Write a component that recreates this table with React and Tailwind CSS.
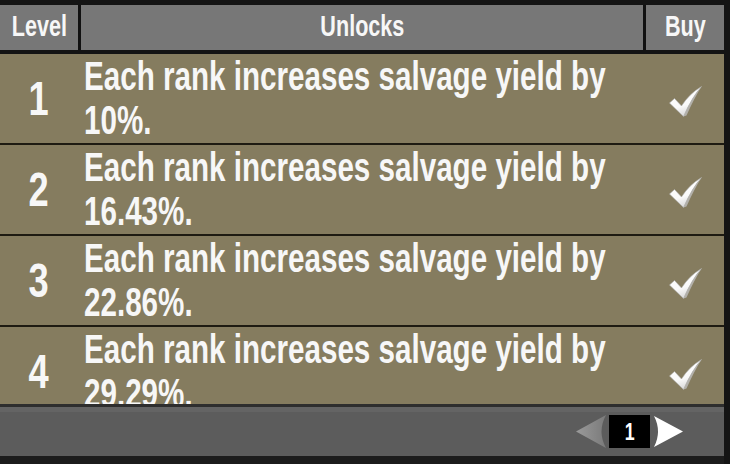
import React from "react";

const rows = [
  { n: 1, v: "10%." },
  { n: 2, v: "16.43%." },
  { n: 3, v: "22.86%." },
  { n: 4, v: "29.29%." },
];

function Check() {
  return (
    <svg width="33" height="31" viewBox="0 0 33 31" className="mt-[6px]">
      <defs>
        <linearGradient id="ck" x1="0" y1="0" x2="0.3" y2="1">
          <stop offset="0" stopColor="#ffffff" />
          <stop offset="0.7" stopColor="#fafafa" />
          <stop offset="1" stopColor="#dcdcdc" />
        </linearGradient>
      </defs>
      <path
        d="M0.5 17 L5.5 12.5 L12.5 20 Q20 8 32.5 0.5 Q23 11 14.5 30.5 Z"
        fill="url(#ck)"
        stroke="#b0b0b0"
        strokeWidth="0.6"
        strokeLinejoin="round"
      />
      <path d="M14.5 30.5 Q23 11 32.5 0.5 Q25 12.5 17.5 29.5 Z" fill="#bdbdbd" opacity="0.8" />
    </svg>
  );
}

function ArrowRight({ color }) {
  return (
    <svg width="29" height="31" viewBox="0 0 29 31">
      <path d="M0 0 L29 15.5 L0 31 Q8 15.5 0 0 Z" fill={color} />
    </svg>
  );
}

function ArrowLeft() {
  return (
    <svg width="30" height="33" viewBox="0 0 30 33">
      <defs>
        <linearGradient id="al" x1="0" y1="0" x2="1" y2="0">
          <stop offset="0" stopColor="#9a9a9a" />
          <stop offset="1" stopColor="#7a7a7a" />
        </linearGradient>
      </defs>
      <path d="M30 0 L0 16.5 L30 33 Q21 16.5 30 0 Z" fill="url(#al)" />
    </svg>
  );
}

export default function App() {
  return (
    <div className="w-[730px] h-[464px] overflow-hidden bg-[#141414] font-['Liberation_Sans',Arial,sans-serif] font-bold text-[#f7f7f7]">
      <div className="flex h-full flex-col pt-[5px] pr-[6px]">
        {/* header */}
        <div className="flex h-[45px] shrink-0 bg-[#777777]">
          <div className="flex w-[78px] items-center justify-center pb-[4px]">
            <span className="scale-x-[0.72] text-[30px] leading-none">Level</span>
          </div>
          <div className="w-[3px] bg-[#111]" />
          <div className="flex flex-1 items-center justify-center pb-[4px]">
            <span className="scale-x-[0.72] text-[30px] leading-none">Unlocks</span>
          </div>
          <div className="w-[3px] bg-[#111]" />
          <div className="flex w-[78px] items-center justify-center pb-[4px]">
            <span className="scale-x-[0.72] text-[30px] leading-none">Buy</span>
          </div>
        </div>

        {/* rows */}
        <div className="mt-[4px] flex h-[350px] shrink-0 flex-col gap-[2px] overflow-hidden bg-[#1e1b12]">
          {rows.map((r) => (
            <div key={r.n} className="flex h-[89px] shrink-0 bg-[#857c5f]">
              <div className="flex w-[78px] shrink-0 items-center justify-center">
                <span className="scale-x-[0.74] text-[49px] leading-none">{r.n}</span>
              </div>
              <div className="min-w-0 flex-1 pl-[6px]">
                <div className="origin-left scale-x-[0.74] whitespace-nowrap text-[40px] leading-[44px]">
                  Each rank increases salvage yield by
                  <br />
                  {r.v}
                </div>
              </div>
              <div className="flex w-[78px] shrink-0 items-center justify-center">
                <Check />
              </div>
            </div>
          ))}
        </div>

        {/* footer */}
        <div className="flex h-[52px] shrink-0 items-center justify-end border-t-[3px] border-t-[#2e2e2e] bg-[#5c5c5c] pr-[41px] shadow-[inset_0_5px_0_#646464]">
          <ArrowLeft />
          <div className="ml-[3px] flex h-[33px] w-[41px] items-center justify-center bg-black">
            <span className="scale-x-[0.74] text-[24px] leading-none text-white">1</span>
          </div>
          <div className="ml-[4px]">
            <ArrowRight color="#ffffff" />
          </div>
        </div>
        <div className="flex-1 bg-[#1c1c1c]" />
      </div>
    </div>
  );
}
